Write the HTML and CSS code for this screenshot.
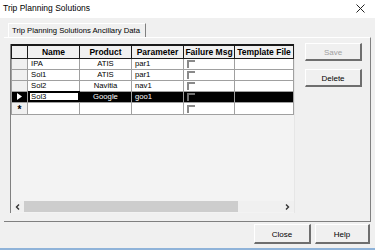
FILE: index.html
```html
<html>
<head>
<title>Trip Planning Solutions</title>
<meta name="viewport" content="width=device-width, initial-scale=1"/>
<link rel="stylesheet" href="styles.css">
</head>
<body>

<div class="titlebar">
  <span class="caption">Trip Planning Solutions</span>
  <svg class="closex" width="9" height="9" viewBox="0 0 9 9"><path d="M0.5 0.5 L8.5 8.5 M8.5 0.5 L0.5 8.5" stroke="#222" stroke-width="1"/></svg>
</div>

<div class="tabstrip">
  <div class="tab">Trip Planning Solutions Ancillary Data</div>
</div>

<div class="panel">
  <div class="grid">
    <table class="rows">
      <colgroup>
        <col class="c-hdr"><col class="c-name"><col class="c-prod"><col class="c-param"><col class="c-fail"><col class="c-tmpl">
      </colgroup>
      <tr class="head">
        <th class="corner"></th><th>Name</th><th>Product</th><th>Parameter</th><th>Failure Msg</th><th>Template File</th>
      </tr>
      <tr>
        <td class="rh"></td><td>IPA</td><td class="mid">ATIS</td><td>par1</td><td><span class="chk"></span></td><td></td>
      </tr>
      <tr>
        <td class="rh"></td><td>Sol1</td><td class="mid">ATIS</td><td>par1</td><td><span class="chk"></span></td><td></td>
      </tr>
      <tr>
        <td class="rh"></td><td>Sol2</td><td class="mid">Navitia</td><td>nav1</td><td><span class="chk"></span></td><td></td>
      </tr>
      <tr class="sel">
        <td class="rh"><svg width="5" height="7" viewBox="0 0 5 7"><path d="M0 0 L5 3.5 L0 7 Z" fill="#fff"/></svg></td>
        <td class="edit">Sol3</td><td class="mid">Google</td><td>goo1</td><td><span class="chk"></span></td><td></td>
      </tr>
      <tr>
        <td class="rh star">*</td><td></td><td></td><td></td><td><span class="chk"></span></td><td></td>
      </tr>
    </table>
    <div class="fill"></div>
    <div class="hscroll">
      <span class="arrow"><svg width="5" height="6" viewBox="0 0 5 6"><path d="M4 0.5 L1.5 3 L4 5.5" fill="none" stroke="#333" stroke-width="1.4"/></svg></span>
      <span class="thumb"></span>
      <span class="track"></span>
      <span class="arrow"><svg width="5" height="6" viewBox="0 0 5 6"><path d="M1 0.5 L3.5 3 L1 5.5" fill="none" stroke="#333" stroke-width="1.4"/></svg></span>
    </div>
  </div>

  <div class="side">
    <div class="btn off">Save</div>
    <div class="btn">Delete</div>
  </div>
</div>

<div class="footer">
  <div class="btn wide">Close</div>
  <div class="btn wide">Help</div>
</div>
<div class="taskline"></div>

</body>
</html>
```

FILE: styles.css
```css
html, body {margin:0; padding:0;}
body {
 width: 375px;
 height: 250px;
 overflow: hidden;
 background: #f0f0f0;
 color: #000;
 font: normal 8px/1 "Liberation Sans", Arial, sans-serif;
}

/* window caption */
.titlebar {
 height: 18px;
 background: #fff;
 display: flex;
 align-items: center;
 justify-content: space-between;
 padding: 0 10px 0 3px;
}
.caption {font-size: 8.5px; margin-top: -2px;}
.closex {margin-top: -2px;}

/* tab */
.tabstrip {height: 14px; padding: 5px 0 0 8px;}
.tab {
 display: inline-block;
 box-sizing: border-box;
 width: 138px;
 height: 14px;
 padding: 3px 0 0 3px;
 border-top: 1px solid #fff;
 border-left: 1px solid #fff;
 border-right: 1px solid #808080;
 font-size: 7.7px;
}

.panel {
 display: flex;
 box-sizing: border-box;
 width: 367px;
 height: 185px;
 margin-left: 4px;
 padding: 6px 0 0 6px;
 border-top: 1px solid #fff;
 border-right: 1px solid #808080;
 border-bottom: 1px solid #808080;
}

/* data grid */
.grid {
 display: flex;
 flex-direction: column;
 box-sizing: border-box;
 width: 285px;
 height: 169px;
 border-left: 1px solid #808080;
 border-right: 1px solid #e6e6e6;
 background: #f3f3f3;
}
.rows {
 border-collapse: collapse;
 table-layout: fixed;
 width: 282px;
 font: normal 7.7px/1 "Liberation Sans", Arial, sans-serif;
}
.c-hdr {width: 16px;}
.c-name, .c-prod, .c-param {width: 52px;}
.c-fail {width: 51px;}
.c-tmpl {width: 59px;}

.rows th {
 height: 13px;
 padding: 0 1px;
 background: #f0f0f0;
 border: 1px solid #1a1a1a;
 border-top-width: 2px;
 font-size: 8.5px;
 font-weight: bold;
 white-space: nowrap;
 overflow: hidden;
 text-align: center;
}
.rows td {
 height: 11px;
 padding: 0 0 0 3px;
 background: #fff;
 border: 1px solid #a0a0a0;
 font-size: 7.7px;
 line-height: 9px;
 white-space: nowrap;
 overflow: hidden;
 vertical-align: middle;
}
.rows td.mid {text-align: center; padding-left: 0;}
.rows td.rh {
 background: #f0f0f0;
 padding: 0;
 text-align: center;
 border-color: #a0a0a0;
}
.rows td.rh svg {display: block; margin: 0 auto;}
.rows td.star {font-size: 10px; font-weight: bold; line-height: 8px; padding-top: 3px;}

.rows tr.sel td {background: #000; color: #fff;}
.rows tr.sel td.rh {background: #000;}
.rows tr.sel td.edit {
 background: #fff;
 color: #000;
 outline: 2px solid #000;
 outline-offset: -2px;
}

.chk {
 display: block;
 box-sizing: border-box;
 width: 8px;
 height: 8px;
 margin-top: 1px;
 border-top: 2px solid #8a8a8a;
 border-left: 2px solid #8a8a8a;
}
.rows tr.sel .chk {border-color: #707070;}

.fill {flex: 1;}

.hscroll {
 display: flex;
 height: 11px;
 margin-bottom: 1px;
 background: #f0f0f0;
}
.arrow {
 display: flex;
 align-items: center;
 justify-content: center;
 width: 13px;
}
.thumb {width: 214px; background: #cdcdcd;}
.track {flex: 1;}

/* buttons */
.side {
 display: flex;
 flex-direction: column;
 gap: 8px;
 margin: -1px 0 0 10px;
}
.btn {
 box-sizing: border-box;
 width: 57px;
 height: 18px;
 padding-top: 5px;
 text-align: center;
 background: #f0f0f0;
 border-top: 1px solid #fff;
 border-left: 1px solid #fff;
 border-right: 2px solid #6e6e6e;
 border-bottom: 2px solid #6e6e6e;
}
.btn.off {color: #a0a0a0;}

.footer {
 display: flex;
 justify-content: flex-end;
 gap: 4px;
 height: 26px;
 padding: 2px 5px 0 0;
 box-sizing: border-box;
}
.btn.wide {height: 20px; padding-top: 6px;}
.footer .btn:last-child {width: 55px;}

.taskline {height: 3px; background: #8fb3d9;}
```
